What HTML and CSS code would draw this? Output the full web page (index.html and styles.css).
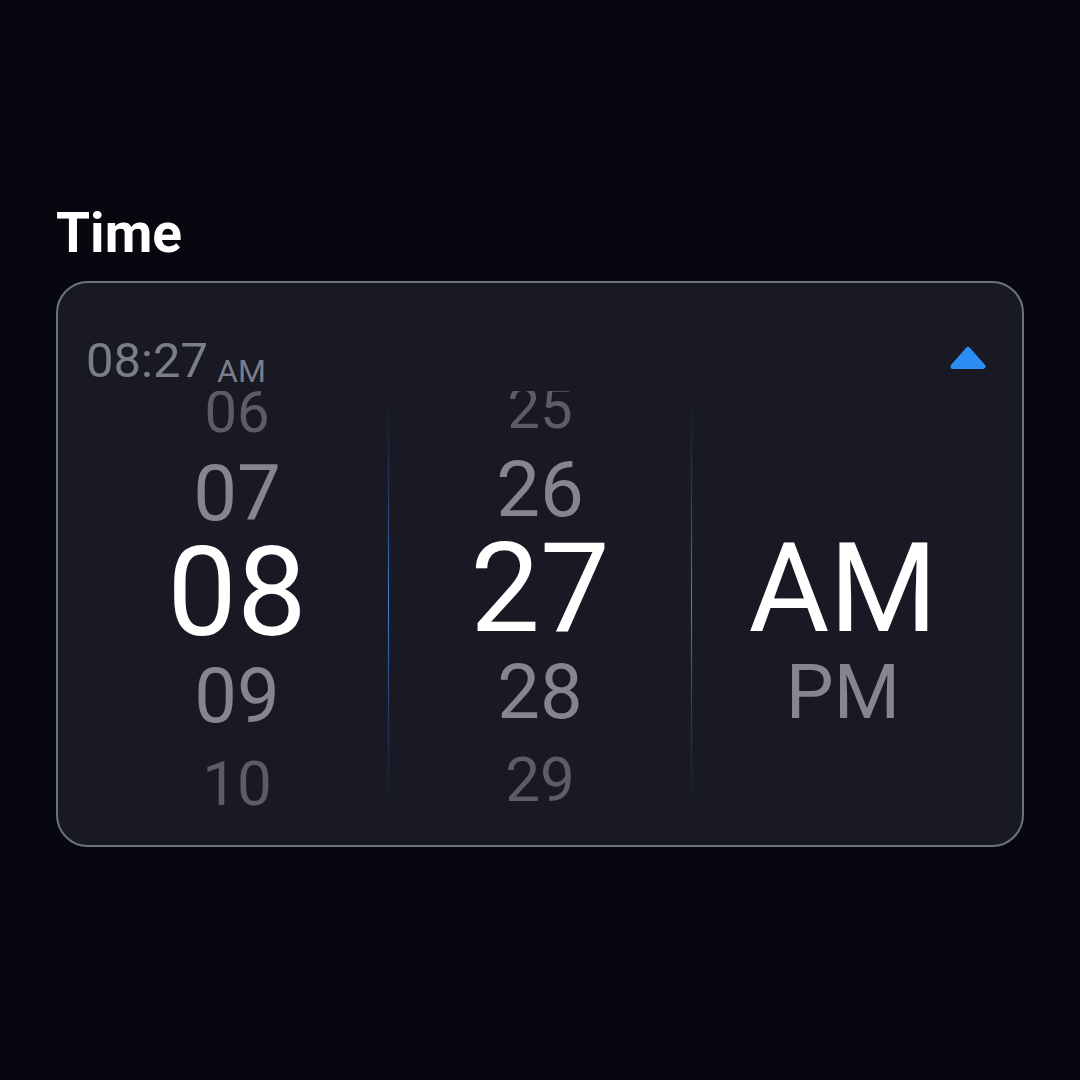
FILE: index.html
```html
<!DOCTYPE html>
<html lang="en">
<head>
<meta charset="utf-8">
<title>Time</title>
<link rel="stylesheet" href="styles.css">
</head>
<body>
<div class="page">
  <h1 class="title">Time</h1>
  <div class="card">
    <div class="card-head">
      <div class="current">08:27<span class="current-ampm">AM</span></div>
      <svg class="caret" width="38" height="23" viewBox="0 0 38 23" aria-hidden="true">
        <polygon points="4,20.5 19,3.5 34,20.5" fill="#2b8ef2" stroke="#2b8ef2" stroke-width="5" stroke-linejoin="round"/>
      </svg>
    </div>
    <div class="picker">
      <div class="col">
        <div class="wheel">
          <div class="item item--t2">06</div>
          <div class="item item--t1">07</div>
          <div class="item item--sel">08</div>
          <div class="item item--b1">09</div>
          <div class="item item--b2">10</div>
        </div>
      </div>
      <div class="divider"></div>
      <div class="col">
        <div class="wheel wheel--shift">
          <div class="item item--t2">25</div>
          <div class="item item--t1">26</div>
          <div class="item item--sel">27</div>
          <div class="item item--b1">28</div>
          <div class="item item--b2">29</div>
        </div>
      </div>
      <div class="divider"></div>
      <div class="col">
        <div class="wheel wheel--shift">
          <div class="item item--t2"></div>
          <div class="item item--t1"></div>
          <div class="item item--sel">AM</div>
          <div class="item item--b1">PM</div>
          <div class="item item--b2"></div>
        </div>
      </div>
    </div>
  </div>
</div>
</body>
</html>
```

FILE: styles.css
```css
html, body {
  margin: 0;
  padding: 0;
  background: #07080f;
}

body {
  font-family: Roboto, "Liberation Sans", sans-serif;
  width: 1080px;
  height: 1080px;
  overflow: hidden;
}

.page {
  padding: 205px 56px 0 56px;
}

.title {
  margin: 0 0 20px 0;
  font-size: 55px;
  line-height: 56px;
  font-weight: 700;
  color: #ffffff;
}

.card {
  height: 566px;
  box-sizing: border-box;
  border: 2px solid #6e727f;
  border-radius: 32px;
  background: #181922;
  padding: 54px 28px 21px 28px;
  display: flex;
  flex-direction: column;
}

.card-head {
  height: 54px;
  display: flex;
  justify-content: space-between;
  align-items: flex-start;
}

.current {
  font-size: 49px;
  line-height: 48px;
  color: #7b7e8a;
  white-space: nowrap;
}

.current-ampm {
  font-size: 32px;
  line-height: 1;
  margin-left: 9px;
  vertical-align: -5px;
}

.caret {
  display: block;
  margin: 9px 7px 0 0;
}

.picker {
  height: 433px;
  display: grid;
  grid-template-columns: 1fr 1px 1fr 1px 1fr;
}

.col {
  overflow: hidden;
  height: 433px;
}

.wheel {
  display: flex;
  flex-direction: column;
  align-items: center;
  margin-top: -18px;
}

.wheel--shift {
  margin-top: -22px;
}

.item {
  text-align: center;
  white-space: nowrap;
  font-weight: 400;
}

.item--t2 {
  height: 78px;
  line-height: 78px;
  font-size: 58px;
  color: #5b5c65;
}

.item--t1 {
  height: 86px;
  line-height: 86px;
  font-size: 78px;
  color: #85868d;
}

.item--sel {
  height: 112px;
  line-height: 112px;
  font-size: 124px;
  color: #ffffff;
}

.item--b1 {
  height: 95px;
  line-height: 95px;
  font-size: 76px;
  color: #85868d;
}

.item--b2 {
  height: 80px;
  line-height: 80px;
  font-size: 62px;
  color: #5b5c65;
}

.divider {
  margin: 17px 0 27px 0;
  background: linear-gradient(to bottom, rgba(58, 110, 186, 0) 0%, rgba(58, 110, 186, 0.35) 20%, #4a7fcc 50%, rgba(58, 110, 186, 0.35) 80%, rgba(58, 110, 186, 0) 100%);
  box-shadow: 0 0 3px rgba(40, 100, 200, 0.35);
}
```
